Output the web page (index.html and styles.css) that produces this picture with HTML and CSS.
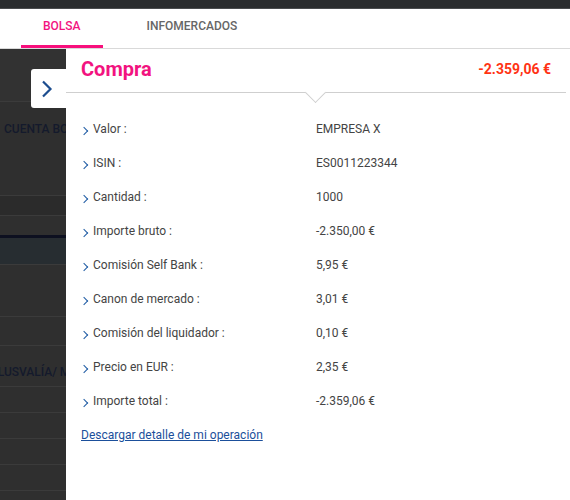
FILE: index.html
```html
<!DOCTYPE html>
<html lang="es">
<head>
  <meta charset="UTF-8" />
  <meta name="viewport" content="width=device-width, initial-scale=1.0" />
  <title>Compra - Detalle de operación</title>
  <link rel="stylesheet" href="styles.css">
</head>
<body>

  <div class="topbar"></div>

  <nav class="tabs">
    <a class="tab active" href="#">BOLSA</a>
    <a class="tab" href="#">INFOMERCADOS</a>
  </nav>

  <div class="main">
    <div class="backdrop">
      <div class="bd-row bd-first"></div>
      <div class="bd-row bd-title">CUENTA BOLSA</div>
      <div class="bd-row bd-dark"></div>
      <div class="bd-row bd-short"></div>
      <div class="bd-row bd-band"></div>
      <div class="bd-row bd-tall"></div>
      <div class="bd-row bd-mid"></div>
      <div class="bd-row bd-title2">PLUSVALÍA/ MINUSVALÍA</div>
      <div class="bd-row"></div>
      <div class="bd-row"></div>
      <div class="bd-row"></div>
      <div class="bd-row"></div>
      <div class="bd-row"></div>
    </div>

    <button class="close-btn" aria-label="Cerrar">
      <svg width="12" height="18" viewBox="0 0 12 18">
        <path d="M2 1.5 L9.5 9 L2 16.5" fill="none" stroke="#1c4d8f" stroke-width="2.2" />
      </svg>
    </button>

    <section class="panel">
      <div class="panel-head">
        <h2>Compra</h2>
        <span class="total">-2.359,06 €</span>
        <span class="notch"></span>
      </div>

      <ul class="details">
        <li><span class="label">Valor :</span><span class="value">EMPRESA X</span></li>
        <li><span class="label">ISIN :</span><span class="value">ES0011223344</span></li>
        <li><span class="label">Cantidad :</span><span class="value">1000</span></li>
        <li><span class="label">Importe bruto :</span><span class="value">-2.350,00 €</span></li>
        <li><span class="label">Comisión Self Bank :</span><span class="value">5,95 €</span></li>
        <li><span class="label">Canon de mercado :</span><span class="value">3,01 €</span></li>
        <li><span class="label">Comisión del liquidador :</span><span class="value">0,10 €</span></li>
        <li><span class="label">Precio en EUR :</span><span class="value">2,35 €</span></li>
        <li><span class="label">Importe total :</span><span class="value">-2.359,06 €</span></li>
      </ul>

      <a class="download" href="#">Descargar detalle de mi operación</a>
    </section>
  </div>

</body>
</html>
```

FILE: styles.css
```css
* { margin: 0; padding: 0; box-sizing: border-box; }

body {
  font-family: Roboto, "Liberation Sans", sans-serif;
  background: #2f2f2f;
  color: #444;
  overflow: hidden;
  height: 500px;
}

.topbar {
  height: 9px;
  background: #2a2c2e;
  border-bottom: 1px solid #4a4c4e;
}

.tabs {
  display: flex;
  height: 40px;
  background: #fff;
  border-bottom: 1px solid #d9d9d9;
  padding-left: 21px;
}

.tab {
  display: flex;
  align-items: center;
  padding: 0 22px 2px;
  font-size: 12px;
  font-weight: 500;
  color: #666;
  text-decoration: none;
  border-bottom: 3px solid transparent;
  margin-right: 22px;
}

.tab.active {
  color: #f2137f;
  border-bottom-color: #f70f7c;
}

.main {
  display: flex;
  position: relative;
  height: 451px;
}

.backdrop {
  width: 66px;
  flex-shrink: 0;
  overflow: hidden;
  white-space: nowrap;
}

.bd-row {
  height: 26px;
  border-bottom: 1px solid #3b3b3b;
  font-size: 12px;
  font-weight: 500;
  color: #141a2c;
}

.bd-first { height: 53px; background: #323232; }
.bd-title { height: 94px; padding: 20px 0 0 4px; }
.bd-dark { height: 20px; background: #2b2b2b; }
.bd-short { height: 22px; border-bottom: 3px solid #0d1020; }
.bd-band { height: 27px; background: #272d31; }
.bd-tall { height: 52px; }
.bd-mid { height: 29px; }
.bd-title2 { height: 41px; padding-top: 19px; margin-left: -10px; }

.close-btn {
  position: absolute;
  left: 31px;
  top: 20px;
  width: 35px;
  height: 39px;
  background: #fff;
  border: none;
  border-radius: 3px 0 0 3px;
  display: flex;
  align-items: center;
  justify-content: center;
  padding-right: 3px;
}

.panel {
  flex: 1;
  background: #fff;
  padding: 0 15px;
}

.panel-head {
  position: relative;
  display: flex;
  justify-content: space-between;
  align-items: center;
  height: 44px;
  border-bottom: 1px solid #cfcfcf;
  margin: 0 -11px 0 -15px;
  padding: 0 15px 3px;
}

.panel-head h2 {
  font-size: 20px;
  font-weight: 700;
  color: #f2137f;
}

.total {
  font-size: 14px;
  font-weight: 700;
  color: #ff3314;
}

.notch {
  position: absolute;
  left: 242px;
  bottom: -8px;
  width: 15px;
  height: 15px;
  background: #fff;
  border-right: 1px solid #cfcfcf;
  border-bottom: 1px solid #cfcfcf;
  transform: rotate(45deg);
}

.details {
  list-style: none;
  padding-top: 19px;
}

.details li {
  display: flex;
  align-items: center;
  height: 34px;
  font-size: 12px;
  color: #444;
}

.label {
  position: relative;
  width: 235px;
  padding-left: 12px;
}

.label::before {
  content: "";
  position: absolute;
  left: 0;
  top: 6px;
  width: 5px;
  height: 5px;
  border-right: 1.5px solid #1d5aa3;
  border-top: 1.5px solid #1d5aa3;
  transform: rotate(45deg);
}

.download {
  display: inline-block;
  margin-top: 10px;
  font-size: 12px;
  color: #1b4f9b;
  text-decoration: underline;
}
```
